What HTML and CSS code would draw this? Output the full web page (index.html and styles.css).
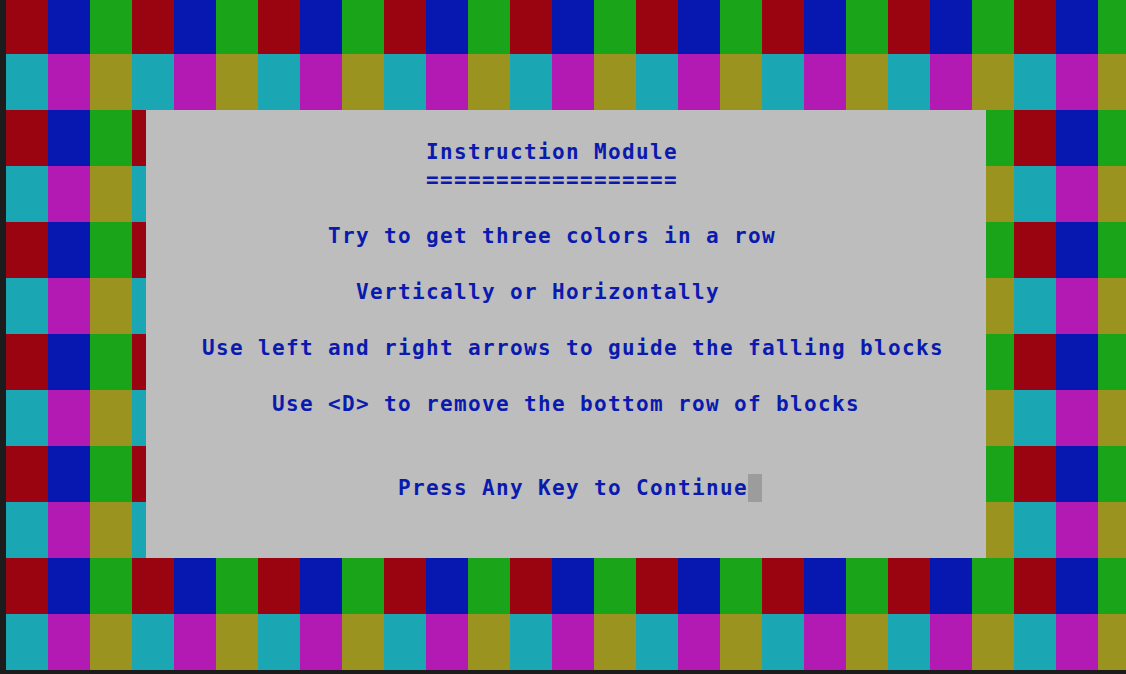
FILE: index.html
```html
<!DOCTYPE html>
<html>
<head>
<meta charset="utf-8">
<link rel="stylesheet" href="styles.css">
</head>
<body>
<div class="screen">
  <div class="row a r1"></div>
  <div class="row b r2"></div>
  <div class="row a r3"></div>
  <div class="row b r4"></div>
  <div class="row a r5"></div>
  <div class="row b r6"></div>
  <div class="row a r7"></div>
  <div class="row b r8"></div>
  <div class="row a r9"></div>
  <div class="row b r10"></div>
  <div class="row a r11"></div>
  <div class="row b r12"></div>
  <div class="dialog"><pre class="text">

                    Instruction Module
                    ==================

             Try to get three colors in a row

               Vertically or Horizontally

    Use left and right arrows to guide the falling blocks

         Use &lt;D&gt; to remove the bottom row of blocks


                  Press Any Key to Continue<span class="cursor"></span></pre></div>
</div>
</body>
</html>
```

FILE: styles.css
```css
html, body {
  margin: 0;
  padding: 0;
  background: #1c1c1c;
  width: 1126px;
  height: 674px;
  overflow: hidden;
}
.screen {
  margin-left: 6px;
  width: 1120px;
  display: grid;
  grid-template-columns: 140px 840px 140px;
  grid-template-rows: 54px repeat(11, 56px);
}
.row {
  grid-column: 1 / 4;
}
.row.a {
  background: linear-gradient(to right, #9a0410 0 42px, #0618b0 42px 84px, #1aa41a 84px 126px);
  background-size: 126px 100%;
  background-repeat: repeat-x;
}
.row.b {
  background: linear-gradient(to right, #1aa6b2 0 42px, #b31ab3 42px 84px, #9b9320 84px 126px);
  background-size: 126px 100%;
  background-repeat: repeat-x;
}
.r1 { grid-row: 1; }
.r2 { grid-row: 2; }
.r3 { grid-row: 3; }
.r4 { grid-row: 4; }
.r5 { grid-row: 5; }
.r6 { grid-row: 6; }
.r7 { grid-row: 7; }
.r8 { grid-row: 8; }
.r9 { grid-row: 9; }
.r10 { grid-row: 10; }
.r11 { grid-row: 11; }
.r12 { grid-row: 12; }
.dialog {
  grid-column: 2;
  grid-row: 3 / 11;
  background: #bdbdbd;
  z-index: 1;
}
.text {
  margin: 0;
  font-family: "DejaVu Sans Mono", "Liberation Mono", monospace;
  font-weight: bold;
  font-size: 21px;
  letter-spacing: 1.356px;
  line-height: 28px;
  color: #0a1aae;
  white-space: pre;
}
.cursor {
  display: inline-block;
  width: 14px;
  height: 28px;
  vertical-align: top;
  background: #9c9c9c;
}
```
